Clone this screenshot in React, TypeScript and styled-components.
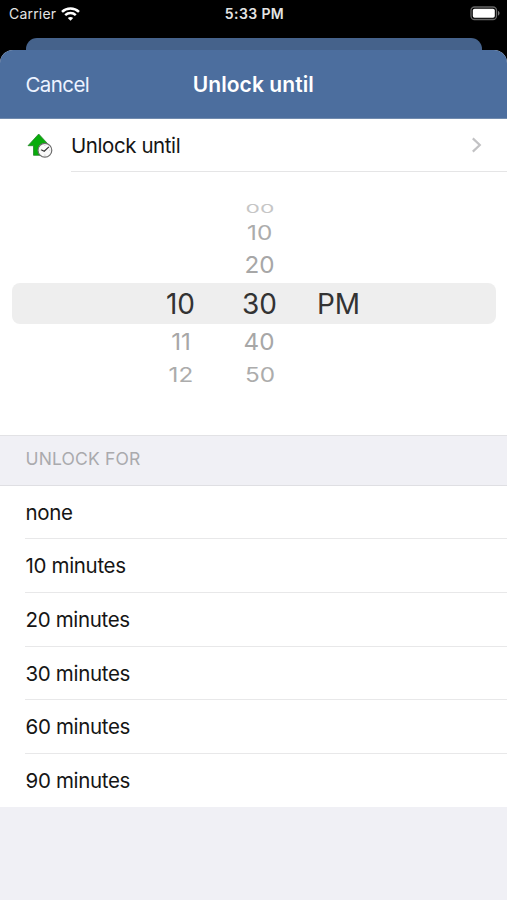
import React from "react";
import styled, { createGlobalStyle } from "styled-components";

const GlobalStyle = createGlobalStyle`
  * { box-sizing: border-box; }
  body { margin: 0; background: #000; font-family: Inter, "Liberation Sans", sans-serif; }
`;

const Screen = styled.div`
  width: 507px;
  height: 900px;
  overflow: hidden;
  background: #000;
  display: flex;
  flex-direction: column;
`;

const StatusBar = styled.header`
  height: 38px;
  flex: none;
  padding: 0 7px 11px 9px;
  display: grid;
  grid-template-columns: 1fr auto 1fr;
  align-items: center;
  color: #e4e4e4;
`;

const Carrier = styled.div`
  display: flex;
  align-items: center;
  gap: 5px;
  font-size: 14px;
  letter-spacing: 0.2px;
`;

const Clock = styled.div`
  font-size: 14px;
  font-weight: 600;
  letter-spacing: 0.4px;
`;

const Battery = styled.div`
  justify-self: end;
  display: flex;
`;

const BackSheet = styled.div`
  flex: none;
  height: 12px;
  margin: 0 25px 0 26px;
  background: #45628b;
  border-radius: 11px 11px 0 0;
`;

const Sheet = styled.main`
  flex: 1;
  display: flex;
  flex-direction: column;
  background: #f0f0f5;
  border-radius: 13px 13px 0 0;
  overflow: hidden;
`;

const NavBar = styled.nav`
  flex: none;
  height: 69px;
  padding: 0 26px 0 25.5px;
  display: grid;
  grid-template-columns: 1fr auto 1fr;
  align-items: center;
  background: #4c6e9e;
  border-bottom: 1px solid #718bae;
  color: #fff;
`;

const CancelButton = styled.button`
  justify-self: start;
  padding: 0;
  border: 0;
  background: none;
  color: #edf3ff;
  font: 400 20.5px Inter, sans-serif;
  letter-spacing: -0.6px;
`;

const Title = styled.h1`
  margin: 0;
  font-size: 21px;
  font-weight: 600;
  letter-spacing: 0.08px;
`;

const UnlockRow = styled.div`
  flex: none;
  height: 53px;
  padding-left: 27px;
  display: flex;
  background: #fff;
`;

const IconSlot = styled.div`
  width: 44px;
  padding-top: 14px;
`;

const UnlockLabel = styled.div`
  flex: 1;
  display: flex;
  align-items: center;
  justify-content: space-between;
  padding-right: 25px;
  border-bottom: 1px solid #e5e5e6;
  color: #151515;
  font-size: 20.5px;
  letter-spacing: -0.42px;
`;

const Picker = styled.div`
  flex: none;
  height: 263px;
  padding: 26px 11px 0 12px;
  background: #fff;
`;

const PickerRow = styled.div<{ $height: number; $selected?: boolean }>`
  height: ${(p) => p.$height}px;
  display: grid;
  grid-template-columns: 79px 79px 79px;
  padding-left: 129px;
  align-items: center;
  justify-items: center;
  border-radius: 8px;
  background: ${(p) => (p.$selected ? "#eeeeee" : "transparent")};
`;

const Value = styled.span<{ $size: number; $stretch: number; $squash: number; $color: string; $shift: number }>`
  font-size: ${(p) => p.$size}px;
  line-height: 1;
  color: ${(p) => p.$color};
  transform: translateX(${(p) => p.$shift}px) scale(${(p) => p.$stretch}, ${(p) => p.$squash});
`;

const SectionHeader = styled.h2`
  flex: none;
  height: 51px;
  margin: 0;
  padding: 0 25.5px 5px;
  display: flex;
  align-items: center;
  background: #f0f0f5;
  border-top: 1px solid #e2e2e5;
  border-bottom: 1px solid #dfdfe3;
  color: #aaaaad;
  font-size: 17.5px;
  font-weight: 400;
  letter-spacing: 0.15px;
`;

const Options = styled.ul`
  flex: none;
  height: 321px;
  margin: 0;
  padding: 0 0 0 25px;
  list-style: none;
  display: grid;
  grid-template-rows: 53px repeat(4, 53.75px) 53px;
  background: #fff;
`;

const Option = styled.li`
  display: flex;
  align-items: center;
  padding-left: 0.5px;
  border-bottom: 1px solid #e8e8e9;
  color: #151515;
  font-size: 20.5px;
  letter-spacing: -0.33px;
  &:last-child { border-bottom: 0; }
  &:nth-child(4) { padding-top: 1px; }
`;

const WifiIcon = () => (
  <svg width="19" height="14" viewBox="0 0 19 14" fill="none" stroke="#fff" strokeWidth="2.5">
    <path d="M1 4.9C5.8.5 13.2.5 18 4.9" />
    <path d="M4.2 8.2c3-2.8 7.6-2.8 10.6 0" />
    <path d="M9.5 13.7 6.8 11c1.5-1.4 3.9-1.4 5.4 0Z" fill="#fff" stroke="none" />
  </svg>
);

const BatteryIcon = () => (
  <svg width="30" height="15" viewBox="0 0 30 15">
    <rect x="1" y="1" width="25.5" height="12.5" rx="3.5" fill="none" stroke="#666" strokeWidth="1.3" />
    <rect x="2.8" y="2.8" width="22" height="9" rx="1.8" fill="#fff" />
    <path d="M28 5v4.5c2-.7 2-3.8 0-4.5Z" fill="#777" />
  </svg>
);

const UnlockIcon = () => (
  <svg width="26" height="26" viewBox="0 0 26 26">
    <path d="M11.7 1 1 12.7h5.5v9.6h10.7v-9.6h5.3Z" fill="#08ac0b" stroke="#24862a" strokeWidth="0.8" />
    <circle cx="17.9" cy="17.2" r="6.9" fill="#fafafa" stroke="#6d6d6d" strokeWidth="1.2" />
    <path d="m14.2 16.8 3 1.5 4.7-4.4" fill="none" stroke="#333" strokeWidth="1.2" />
    <path d="M17.9 11.8v1M17.9 21.6v1M12.6 17.2h.8M22.4 17.2h.8" stroke="#aaa" strokeWidth="0.7" />
  </svg>
);

const Chevron = () => (
  <svg width="11" height="16" viewBox="0 0 11 16" fill="none" stroke="#c2c2c4" strokeWidth="2.2">
    <path d="m1.8 1.4 7 6.6-7 6.6" />
  </svg>
);

type PickerLine = {
  height: number;
  values: string[];
  size: number;
  stretch: number;
  squash: number;
  color: string;
  selected?: boolean;
};

const lines: PickerLine[] = [
  { height: 22, values: ["", "00", ""], size: 22, stretch: 1.04, squash: 0.53, color: "#c6c6c6" },
  { height: 27, values: ["", "10", ""], size: 22.5, stretch: 1.08, squash: 0.87, color: "#acacac" },
  { height: 36, values: ["", "20", ""], size: 23.5, stretch: 1.03, squash: 1, color: "#a7a7a7" },
  { height: 41, values: ["10", "30", "PM"], size: 28, stretch: 1, squash: 1, color: "#333333", selected: true },
  { height: 36, values: ["11", "40", ""], size: 23.5, stretch: 1.03, squash: 1, color: "#a7a7a7" },
  { height: 31, values: ["12", "50", ""], size: 22.5, stretch: 1.08, squash: 0.87, color: "#acacac" },
];

const durations = ["none", "10 minutes", "20 minutes", "30 minutes", "60 minutes", "90 minutes"];

export default function App() {
  return (
    <>
      <GlobalStyle />
      <Screen>
        <StatusBar>
          <Carrier>
            Carrier
            <WifiIcon />
          </Carrier>
          <Clock>5:33 PM</Clock>
          <Battery>
            <BatteryIcon />
          </Battery>
        </StatusBar>
        <BackSheet />
        <Sheet>
          <NavBar>
            <CancelButton>Cancel</CancelButton>
            <Title>Unlock until</Title>
          </NavBar>
          <UnlockRow>
            <IconSlot>
              <UnlockIcon />
            </IconSlot>
            <UnlockLabel>
              Unlock until
              <Chevron />
            </UnlockLabel>
          </UnlockRow>
          <Picker>
            {lines.map((line, i) => (
              <PickerRow key={i} $height={line.height} $selected={line.selected}>
                {line.values.map((value, col) => (
                  <Value
                    key={col}
                    $size={line.size}
                    $stretch={line.stretch}
                    $squash={line.squash}
                    $color={line.color}
                    $shift={col === 0 && !line.selected ? 0.5 : 0}
                  >
                    {value}
                  </Value>
                ))}
              </PickerRow>
            ))}
          </Picker>
          <SectionHeader>UNLOCK FOR</SectionHeader>
          <Options>
            {durations.map((duration) => (
              <Option key={duration}>{duration}</Option>
            ))}
          </Options>
        </Sheet>
      </Screen>
    </>
  );
}
